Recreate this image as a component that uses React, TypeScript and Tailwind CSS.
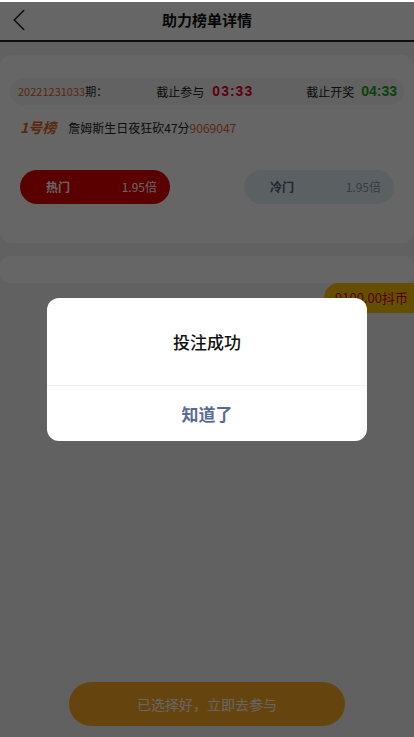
import { ChevronLeft } from "lucide-react";

const cjk = { fontFamily: '"Noto Sans CJK SC", "Liberation Sans", sans-serif' };

export default function App() {
  return (
    <div className="relative min-h-[737px] w-[414px] overflow-hidden bg-[#f2f2f2]" style={cjk}>
      {/* 顶部导航 */}
      <div className="flex h-[42px] items-center border-b-2 border-[#222] bg-white">
        <div className="flex w-[40px] items-center">
          <ChevronLeft className="h-[38px] w-[38px] text-[#222]" strokeWidth={0.95} />
        </div>
        <div className="flex-1 text-center text-[15px] font-bold text-[#111]">助力榜单详情</div>
        <div className="w-[40px]" />
      </div>

      {/* 期数卡片 */}
      <div className="mt-[13px] rounded-[12px] bg-white px-[10px] pt-[23px] pb-[39px]">
        <div className="flex h-[27px] items-center rounded-[14px] bg-[#f5f5f5] pl-[8px] pr-[7px] text-[11px] text-[#222]">
          <span className="text-[#e0651e]">20221231033</span>
          <span>期：</span>
          <div className="ml-auto mr-[53px] flex items-center gap-[8px]">
            <span className="text-[12px]">截止参与</span>
            <span className="text-[14px] font-bold tracking-[1px] text-[#e8001c]" style={{ fontFamily: '"Liberation Sans", sans-serif' }}>
              03:33
            </span>
          </div>
          <div className="flex items-center gap-[7px]">
            <span className="text-[12px]">截止开奖</span>
            <span className="text-[14px] font-bold text-[#1aa51a]" style={{ fontFamily: '"Liberation Sans", sans-serif' }}>
              04:33
            </span>
          </div>
        </div>

        <div className="mt-[12px] flex items-center pl-[10px] text-[12px] text-[#222]">
          <span className="mr-[12px] text-[14px] font-bold italic text-[#e0651e]">1号榜</span>
          <span>詹姆斯生日夜狂砍47分</span>
          <span className="text-[#e0651e]">9069047</span>
        </div>

        <div className="mt-[32px] flex justify-between px-[10px]">
          <button className="flex h-[34px] w-[150px] items-center justify-between rounded-full bg-[#e00000] pl-[26px] pr-[13px] text-white">
            <span className="text-[12px] font-bold">热门</span>
            <span className="text-[12px]">1.95倍</span>
          </button>
          <button className="flex h-[34px] w-[150px] items-center justify-between rounded-full bg-[#e4f0f8] pl-[26px] pr-[13px]">
            <span className="text-[12px] font-bold text-[#4a6078]">冷门</span>
            <span className="text-[12px] text-[#8896a4]">1.95倍</span>
          </button>
        </div>
      </div>

      {/* 空白卡片 */}
      <div className="mt-[13px] h-[27px] rounded-[10px] bg-white" />

      <div className="flex justify-end">
        <div className="flex h-[30px] items-center rounded-l-full bg-[#ffc400] pl-[11px] pr-[6px] text-[13px] text-[#d00000]">
          9100.00抖币
        </div>
      </div>

      {/* 底部按钮 */}
      <div className="absolute bottom-[11px] left-0 right-0 flex justify-center">
        <button className="h-[44px] w-[276px] rounded-full bg-[#ffaa22] text-[14px] text-white">
          已选择好，立即去参与
        </button>
      </div>

      {/* 遮罩与弹窗 */}
      <div className="absolute inset-x-0 top-[2px] bottom-0 flex items-start justify-center bg-black/60">
        <div className="mt-[296px] w-[320px] overflow-hidden rounded-[12px] bg-white">
          <div className="flex h-[87px] items-center justify-center text-[17px] font-medium text-[#111]">
            投注成功
          </div>
          <div className="h-px bg-[#f0f0f0]" />
          <div className="flex h-[55px] items-center justify-center text-[17px] font-bold text-[#576b95]">
            知道了
          </div>
        </div>
      </div>
    </div>
  );
}
